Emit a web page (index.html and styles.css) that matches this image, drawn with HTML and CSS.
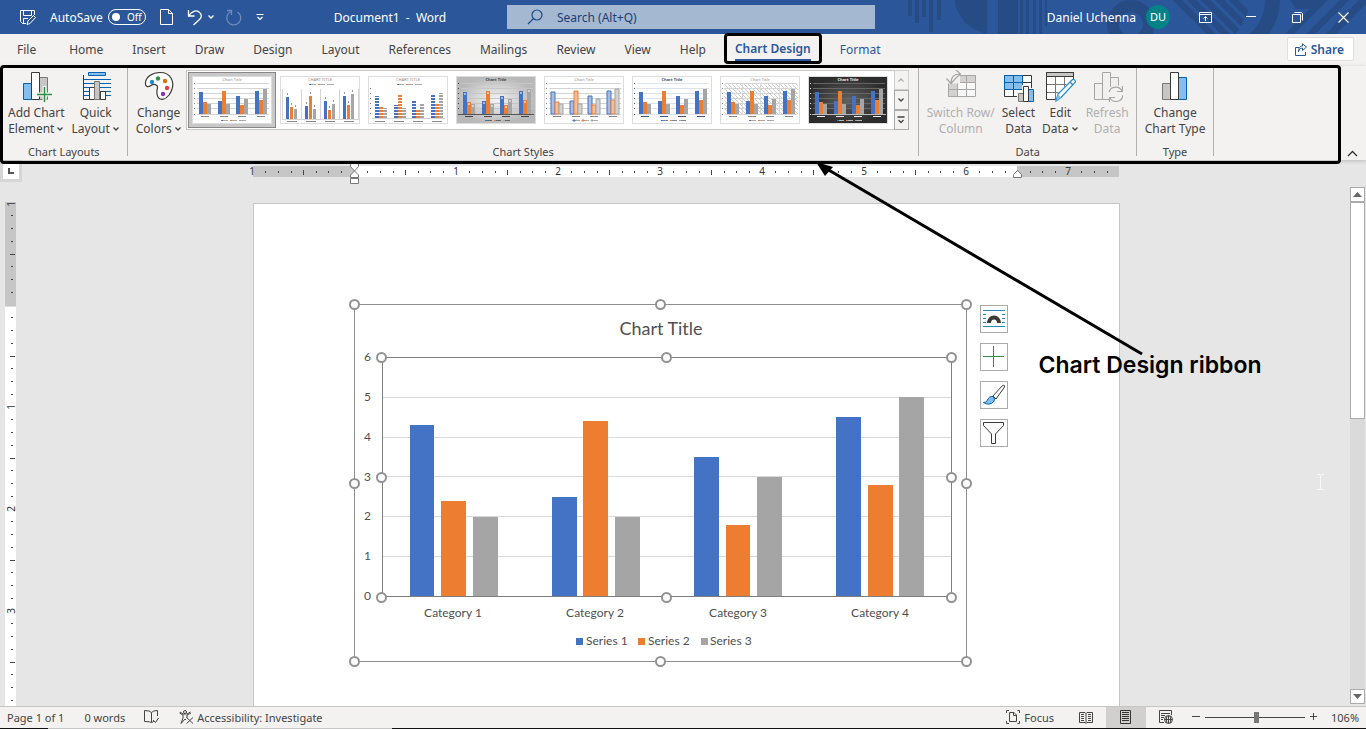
FILE: index.html
```html
<!DOCTYPE html>
<html lang="en">

<head>
    <meta charset="UTF-8">
    <meta name="viewport" content="width=device-width, initial-scale=1.0">
    <title>Document1 - Word</title>
    <link rel="stylesheet" href="styles.css">
</head>

<body>
    <!-- shared drawings -->
    <svg class="defs" width="0" height="0" aria-hidden="true">
        <defs>
            <symbol id="chevron" viewBox="0 0 8 6"><path d="M1.5 1.5L4 4L6.5 1.5" fill="none" stroke="currentColor" stroke-width="1.3"/></symbol>
            <symbol id="thumb-grid" viewBox="0 0 80 48">
                <path d="M5 7.5H77M5 12.5H77M5 17.5H77M5 22.5H77M5 27.5H77M5 32.5H77M5 38.5H77" stroke="var(--grid)"/>
                <path d="M2 7.5h1M2 12.5h1M2 17.5h1M2 22.5h1M2 27.5h1M2 32.5h1M2 38.5h1" stroke="var(--ink)"/>
            </symbol>
            <symbol id="thumb-bars" viewBox="0 0 80 48">
                <path class="s1" d="M7 16h4v22h-4zM26 25h4v13h-4zM44 20h4v18h-4zM63 15h4v23h-4z"/>
                <path class="s2" d="M11 26h4v12h-4zM30 15h4v23h-4zM48 29h4v9h-4zM67 24h4v14h-4z"/>
                <path class="s3" d="M15 28h4v10h-4zM34 28h4v10h-4zM52 23h4v15h-4zM71 13h4v25h-4z"/>
            </symbol>
            <symbol id="thumb-labels" viewBox="0 0 80 48">
                <path d="M9 40.5h8M28 40.5h8M46 40.5h8M65 40.5h8" stroke="var(--ink)"/>
                <path d="M31 44.5h5M40 44.5h5M49 44.5h5" stroke="var(--ink)" opacity=".7"/>
                <path class="s1" d="M29 44h2v1h-2z"/><path class="s2" d="M38 44h2v1h-2z"/><path class="s3" d="M47 44h2v1h-2z"/>
            </symbol>
            <symbol id="thumb-top" viewBox="0 0 80 48">
                <path d="M7 45.5h10M26 45.5h10M45 45.5h10M64 45.5h10" stroke="var(--ink)"/>
                <path d="M31 8.5h5M40 8.5h5M49 8.5h5" stroke="var(--ink)" opacity=".7"/>
                <path class="s1" d="M29 8h2v1h-2z"/><path class="s2" d="M38 8h2v1h-2z"/><path class="s3" d="M47 8h2v1h-2z"/>
            </symbol>
            <pattern id="hatch" width="4" height="4" patternUnits="userSpaceOnUse"><path d="M0 0L4 4" stroke="#c4c4c4" stroke-width=".8"/></pattern>
            <pattern id="stripe" width="4" height="3" patternUnits="userSpaceOnUse"><path d="M0 .5H4" stroke="#fff"/></pattern>
            <radialGradient id="silver"><stop offset="0" stop-color="#f4f4f4"/><stop offset="1" stop-color="#b8b8b8"/></radialGradient>
            <radialGradient id="coal"><stop offset="0" stop-color="#606060"/><stop offset="1" stop-color="#2c2c2c"/></radialGradient>
            <pattern id="ticks" x="-1" width="102" height="11" patternUnits="userSpaceOnUse">
                <path d="M13 5h1v2h-1zM26 5h1v2h-1zM39 5h1v2h-1zM51 4h1v5h-1zM64 5h1v2h-1zM76 5h1v2h-1zM89 5h1v2h-1z" fill="#444"/>
            </pattern>
            <pattern id="ticks-v" y="1" width="11" height="102" patternUnits="userSpaceOnUse">
                <path d="M6 12h2v1h-2zM6 25h2v1h-2zM6 38h2v1h-2zM5 51h5v1h-5zM6 63h2v1h-2zM6 76h2v1h-2zM6 89h2v1h-2z" fill="#444"/>
            </pattern>
        </defs>
    </svg>

    <header class="titlebar">
        <svg class="pattern" width="466" height="34" aria-hidden="true">
            <path d="M8 0h4v16h-4zM15 0h4v23h-4zM22 0h4v17h-4zM29 0h4v32h-4zM37 0h4v20h-4zM55 0h32v34q-20-5-27-19q-5-6-5-15zM98 0h20v34h-20zM120 0h3v34h-3zM126 0h3v34h-3zM133 0h3v34h-3zM139 0h3v34h-3zM145 0h2v26h-2z"/>
            <path d="M273 0h9l34 34h-9zM287 0h9l34 34h-9zM301 0h9l29 29l-4 5zM315 0h9l20 20l-3 6zM329 0h9l10 10l-2 7z"/>
            <path d="M365 0h15q0 18-11 34h-20q16-13 16-34zM390 0h38l-34 34h-9l25-25h-14zM440 0h9l-34 34h-9zM459 0h7v4l-30 30h-10z"/>
            <circle cx="231" cy="24" r="18" fill="none" stroke="#274b84" stroke-width="12"/>
        </svg>
        <div class="titlebar-left">
            <div class="quick-access">
                <button class="icon-btn" aria-label="Save"><svg width="17" height="17" fill="none" stroke="#fff"><path d="M7 14.5H3.5L1.5 12.5V1.5H15.5V6M4.5 1.5V6.5H12.5V1.5M4.5 14V9.5H9M8 15.5L9 12L14.5 6.5L16.5 8.5L11 14.5Z"/></svg></button>
                <label class="autosave">AutoSave <input type="checkbox" aria-label="AutoSave"><span class="toggle">Off</span></label>
                <button class="icon-btn" aria-label="New"><svg width="13" height="17" fill="none" stroke="#fff"><path d="M.5 .5H8.5L12.5 4.5V15.5H.5ZM8.5 .5V4.5H12.5"/></svg></button>
                <button class="icon-btn undo" aria-label="Undo"><svg width="16" height="17" fill="none" stroke="#fff" stroke-width="1.3"><path d="M1.5 1V7H7.5M1.5 7C5 2 9 .8 12 3S15 8 12.5 10.5L6.5 16"/></svg><svg width="8" height="6"><use href="#chevron"/></svg></button>
                <button class="icon-btn faded" aria-label="Redo"><svg width="17" height="17" fill="none" stroke="#fff" stroke-width="1.3"><path d="M2 1.5H6.5V6M6 2.5A7 7 0 1 0 12.5 3"/></svg></button>
                <button class="icon-btn" aria-label="Customize"><svg width="8" height="8" fill="none" stroke="#fff" stroke-width="1.2"><path d="M.5 1.5H7.5M1.5 4L4 6.5L6.5 4"/></svg></button>
            </div>
            <div class="doc-title">Document1&nbsp; - &nbsp;Word</div>
        </div>
        <label class="search">
            <svg width="16" height="16" fill="none" stroke="#1e4b87" stroke-width="1.2"><circle cx="10" cy="6" r="5"/><path d="M6.5 9.5L1 15"/></svg>
            <input type="text" placeholder="Search (Alt+Q)" aria-label="Search">
        </label>
        <div class="titlebar-right">
            <span class="user">Daniel Uchenna</span>
            <span class="avatar">DU</span>
            <button class="window-btn" aria-label="Ribbon display"><svg width="13" height="11" fill="none" stroke="#fff"><path d="M.5 .5H12.5V10.5H.5ZM.5 2.5H12.5M6.5 9V4.5M4.5 6.5L6.5 4.5L8.5 6.5"/></svg></button>
            <button class="window-btn" aria-label="Minimize"><svg width="10" height="11" stroke="#fff"><path d="M0 4.5H10"/></svg></button>
            <button class="window-btn" aria-label="Restore"><svg width="11" height="11" fill="none" stroke="#fff"><path d="M.5 2.5H8.5V10.5H.5ZM2.5 .5H9.5L10.5 1.5V8.5"/></svg></button>
            <button class="window-btn" aria-label="Close"><svg width="11" height="11" stroke="#fff" stroke-width="1.2"><path d="M.5 .5L10.5 10.5M10.5 .5L.5 10.5"/></svg></button>
        </div>
    </header>

    <nav class="tabs">
        <button class="tab">File</button>
        <button class="tab">Home</button>
        <button class="tab">Insert</button>
        <button class="tab">Draw</button>
        <button class="tab">Design</button>
        <button class="tab">Layout</button>
        <button class="tab">References</button>
        <button class="tab">Mailings</button>
        <button class="tab">Review</button>
        <button class="tab">View</button>
        <button class="tab">Help</button>
        <button class="tab active"><span>Chart Design</span></button>
        <button class="tab contextual">Format</button>
        <button class="share"><svg width="12" height="13" fill="none" stroke="#2b579a"><path d="M4 4.5H.5V12.5H10.5V9M3.5 9C4 6 5.5 5 7.5 5V7.5L11.5 4L7.5 .8V3C5 3 3.5 5 3.5 9Z"/></svg>Share</button>
    </nav>

    <section class="ribbon">
        <div class="group">
            <div class="group-body">
                <button class="tool">
                    <svg width="32" height="32"><path d="M3.5 13.5h8v16h-8z" fill="#83beec" stroke="#0063b1"/><path d="M19.5 7.5h8v22h-8z" fill="#c8c6c4" stroke="#797774"/><path d="M11.5 2.5h8v27h-8z" fill="#fff" stroke="#3a3a38"/><path d="M24.5 16V32M17 24.5H32" stroke="#f3f2f1" stroke-width="4"/><path d="M24.5 17V32M17 24.5H32" stroke="#309048" stroke-width="1.5"/></svg>
                    <span>Add Chart<br>Element<svg class="chev"><use href="#chevron"/></svg></span>
                </button>
                <button class="tool">
                    <svg width="32" height="32"><path d="M8.5 2.5h17v3h-17z" fill="#83beec" stroke="#0063b1"/><path d="M4 9.5H31M4 13.5H31M4 17.5H31M4 21.5H31M4 25.5H31" stroke="#0063b1"/><path d="M3.5 5V29.5H26" fill="none" stroke="#3a3a38"/><path d="M9.5 17.5h5v12h-5zM20.5 21.5h5v8h-5z" fill="#fff" stroke="#3a3a38"/><path d="M14.5 11.5h5v18h-5z" fill="#c8c6c4" stroke="#797774"/></svg>
                    <span>Quick<br>Layout<svg class="chev"><use href="#chevron"/></svg></span>
                </button>
            </div>
            <div class="group-name">Chart Layouts</div>
        </div>
        <div class="group">
            <div class="group-body">
                <button class="tool">
                    <svg width="32" height="32"><path d="M17 2.5C9 2.5 3 7 2.5 12.5C2 17 5 17.5 8 15.5C11 13.5 15 14.5 14.5 18C14 21 13 23 15 27C17 31 22 30 26 25C30 19 31 13 28 8C26 4.5 22 2.5 17 2.5Z" fill="#fff" stroke="#3a3a38" stroke-width="1.2"/><circle cx="9" cy="12" r="2.2" fill="#1e8bcd"/><circle cx="15" cy="8.5" r="2.2" fill="#309048"/><circle cx="22" cy="11" r="2.2" fill="#e07000"/><circle cx="24" cy="18" r="2.2" fill="#ed3d3b"/><circle cx="20" cy="24" r="2.2" fill="#8e2fb0"/></svg>
                    <span>Change<br>Colors<svg class="chev"><use href="#chevron"/></svg></span>
                </button>
                <div class="gallery">
                    <button class="style selected" aria-label="Style 1"><svg class="thumb" width="80" height="48"><use href="#thumb-grid"/><use href="#thumb-bars"/><use href="#thumb-labels"/><text x="40" y="5">Chart Title</text></svg></button>
                    <button class="style" aria-label="Style 2"><svg class="thumb" width="80" height="48">
                            <path d="M2.5 13V43M21.5 13V43M40.5 13V43M59.5 13V43M78.5 13V43M2 43.5H79" stroke="#d4d4d4"/>
                            <path class="s1" d="M6 21h3v22h-3zM25 30h3v13h-3zM44 25h3v18h-3zM63 20h3v23h-3z"/><path class="s2" d="M10 31h3v12h-3zM29 20h3v23h-3zM48 34h3v9h-3zM67 29h3v14h-3z"/><path class="s3" d="M14 33h3v10h-3zM33 33h3v10h-3zM52 28h3v15h-3zM71 18h3v25h-3z"/>
                            <path d="M7 18h1M11 28h1M15 30h1M26 27h1M30 17h1M34 30h1M45 22h1M49 31h1M53 25h1M64 17h1M68 26h1M72 15h1" stroke="#999" stroke-width="2"/><use href="#thumb-top"/><text x="40" y="5">CHART TITLE</text></svg></button>
                    <button class="style" aria-label="Style 3"><svg class="thumb" width="80" height="48"><use href="#thumb-bars" y="4"/><path d="M4 12h72v30h-72z" fill="url(#stripe)"/><path d="M4 42.5H77" stroke="#d4d4d4"/><path d="M2 12.5h1M2 17.5h1M2 22.5h1M2 27.5h1M2 32.5h1M2 37.5h1" stroke="#777"/><use href="#thumb-top"/><text x="40" y="5">CHART TITLE</text></svg></button>
                    <button class="style" aria-label="Style 4"><svg class="thumb silver" width="80" height="48"><path d="M0 0h80v48h-80z" fill="url(#silver)"/><use href="#thumb-grid"/><use href="#thumb-bars"/><path d="M2 38.5H78" stroke="#555"/><path d="M8 18h2M27 27h2M45 22h2M64 17h2M12 28h2M31 17h2M49 31h2M68 26h2M16 30h2M35 30h2M53 25h2M72 15h2" stroke="#fff"/><use href="#thumb-labels"/><text x="40" y="5" font-weight="700">Chart Title</text></svg></button>
                    <button class="style" aria-label="Style 5"><svg class="thumb outlined" width="80" height="48"><use href="#thumb-grid"/><use href="#thumb-bars"/><use href="#thumb-labels"/><text x="40" y="5">Chart Title</text></svg></button>
                    <button class="style" aria-label="Style 6"><svg class="thumb pale" width="80" height="48"><use href="#thumb-grid"/><use href="#thumb-bars"/><use href="#thumb-labels"/><text x="40" y="5" font-weight="700">Chart Title</text></svg></button>
                    <button class="style" aria-label="Style 7"><svg class="thumb" width="80" height="48"><path d="M4 7h74v31h-74z" fill="url(#hatch)"/><path d="M22.5 7V38M40.5 7V38M59.5 7V38" stroke="#ddd"/><use href="#thumb-grid"/><use href="#thumb-bars"/><use href="#thumb-labels"/><text x="40" y="5">Chart Title</text></svg></button>
                    <button class="style" aria-label="Style 8"><svg class="thumb dark" width="80" height="48"><path d="M0 0h80v48h-80z" fill="url(#coal)"/><use href="#thumb-grid"/><use href="#thumb-bars"/><path d="M4 38.5H78" stroke="#bbb"/><use href="#thumb-labels"/><text x="40" y="5" font-weight="700">Chart Title</text></svg></button>
                    <div class="gallery-nav">
                        <button class="disabled" aria-label="Previous row"><svg width="8" height="6" fill="none" stroke="currentColor" stroke-width="1.3"><path d="M1.5 4.5L4 2L6.5 4.5"/></svg></button>
                        <button aria-label="Next row"><svg width="8" height="6"><use href="#chevron"/></svg></button>
                        <button aria-label="More styles"><svg width="8" height="8" fill="none" stroke="currentColor" stroke-width="1.3"><path d="M.5 1H7.5M1.5 4L4 6.5L6.5 4"/></svg></button>
                    </div>
                </div>
            </div>
            <div class="group-name">Chart Styles</div>
        </div>
        <div class="group">
            <div class="group-body">
                <button class="tool disabled">
                    <svg width="32" height="32" fill="none" stroke="#a8a6a4"><path d="M3.5 5.5h27v21h-27z" fill="#f8f8f8"/><path d="M3.5 5.5h27v7h-18v14h-9z" fill="#d4d2d0"/><path d="M3.5 12.5H30.5M3.5 19.5H30.5M12.5 5.5V26.5M21.5 5.5V26.5"/><path d="M1 .5h14v13h-14z" fill="#f3f2f1" stroke="none"/><path d="M6 13C6 7 9 4 15 4M1.5 8.5L6 13.5L10.5 8.5M10.5 -.5L15.5 4L10.5 8.5" stroke-width="1.2"/></svg>
                    <span>Switch Row/<br>Column</span>
                </button>
                <button class="tool">
                    <svg width="32" height="32"><path d="M2.5 5.5h27v21h-27z" fill="#fff" stroke="#3a3a38"/><path d="M2.5 5.5h18v14h-18z" fill="#83beec"/><path d="M2.5 12.5H29.5M2.5 19.5H29.5M11.5 5.5V26.5M20.5 5.5V26.5" stroke="#3a3a38"/><path d="M2.5 19.5V5.5H20.5V19.5ZM2.5 12.5H20.5M11.5 5.5V19.5" fill="none" stroke="#0063b1"/><path d="M15 22h5v-7h7v3h5v14h-17z" fill="#f3f2f1"/><path d="M16.5 23.5h5v8h-5z" fill="#c8c6c4" stroke="#797774"/><path d="M26.5 19.5h5v12h-5z" fill="#83beec" stroke="#0063b1"/><path d="M21.5 16.5h5v15h-5z" fill="#fff" stroke="#3a3a38"/></svg>
                    <span>Select<br>Data</span>
                </button>
                <button class="tool">
                    <svg width="32" height="32"><path d="M2.5 2.5h27v27h-27z" fill="#fff" stroke="#3a3a38"/><path d="M2.5 2.5h27v4h-27z" fill="#c8c6c4" stroke="#3a3a38"/><path d="M3 14.5H29M3 22.5H29M11.5 7V29M20.5 7V29" stroke="#797774"/><path d="M11 32L14 23L28 9L33 14L32 32Z" fill="#f3f2f1"/><path d="M12 31L14 24L28.5 9.5Q31 9 31.5 12L17 27.5ZM26 12L29 15" fill="#fff" stroke="#1e8bcd" stroke-width="1.2"/><path d="M12 31L14 24L17 27.5Z" fill="#83beec"/></svg>
                    <span>Edit<br>Data<svg class="chev"><use href="#chevron"/></svg></span>
                </button>
                <button class="tool disabled">
                    <svg width="32" height="32" fill="#f1f0ef" stroke="#a8a6a4"><path d="M3.5 13.5h8v16h-8zM19.5 7.5h8v22h-8zM11.5 2.5h8v27h-8z"/><circle cx="25" cy="24" r="9" fill="#f3f2f1" stroke="none"/><path d="M18 22A7 7 0 0 1 31 21M31.5 16V21.5H26M32 25A7 7 0 0 1 19 28M18.5 32V27.5H24" fill="none" stroke-width="1.2"/></svg>
                    <span>Refresh<br>Data</span>
                </button>
            </div>
            <div class="group-name">Data</div>
        </div>
        <div class="group">
            <div class="group-body">
                <button class="tool">
                    <svg width="32" height="32"><path d="M3.5 13.5h8v16h-8z" fill="#c8c6c4" stroke="#797774"/><path d="M19.5 7.5h8v22h-8z" fill="#83beec" stroke="#0063b1"/><path d="M11.5 2.5h8v27h-8z" fill="#fff" stroke="#3a3a38"/></svg>
                    <span>Change<br>Chart Type</span>
                </button>
            </div>
            <div class="group-name">Type</div>
        </div>
        <button class="collapse" aria-label="Collapse ribbon"><svg width="11" height="7" fill="none" stroke="#333" stroke-width="1.3"><path d="M1 6L5.5 1.5L10 6"/></svg></button>
        <div class="ribbon-mark"></div>
    </section>

    <main class="workspace">
        <div class="corner"><button aria-label="Tab selector"><svg width="6" height="6"><path d="M0 0h2v4h4v2h-6z" fill="#555"/></svg></button></div>
        <div class="ruler">
            <svg class="ruler-h" width="866" height="11">
                <path d="M0 0h866v11h-866z" fill="#c6c6c6"/><path d="M101 0h663v11h-663z" fill="#fff"/><path d="M0 0h866v11h-866z" fill="url(#ticks)"/>
                <g><text x="-1" y="9">1</text><text x="203" y="9">1</text><text x="305" y="9">2</text><text x="407" y="9">3</text><text x="509" y="9">4</text><text x="611" y="9">5</text><text x="713" y="9">6</text><text x="815" y="9">7</text></g>
                <path d="M97.5 -2.5h8v3l-4 4.5l-4-4.5zM97.5 11.5v-2.5l4-4l4 4v2.5zM97.5 12.5h8v5h-8zM760.5 11.5v-3l4-4l4 4v3z" fill="#fff" stroke="#777"/>
            </svg>
        </div>
        <div class="ruler-side">
            <svg class="ruler-v" width="11" height="504">
                <path d="M0 0h11v104h-11z" fill="#c6c6c6"/><path d="M0 104h11v1h-11z" fill="#ddd"/><path d="M0 105h11v399h-11z" fill="#fff"/><path d="M0 0h11v504h-11z" fill="url(#ticks-v)"/>
                <g><text transform="translate(10 2) rotate(-90)">1</text><text transform="translate(10 205) rotate(-90)">1</text><text transform="translate(10 307) rotate(-90)">2</text><text transform="translate(10 409) rotate(-90)">3</text></g>
            </svg>
        </div>
        <div class="canvas">
            <article class="page">
                <svg class="chart" width="624" height="370">
                    <rect x="6.5" y="6.5" width="612" height="357" fill="#fff" stroke="#8e8e8e"/>
                    <text class="chart-title" x="313" y="37">Chart Title</text>
                    <path d="M35 99.5H603M35 139.5H603M35 178.5H603M35 218.5H603M35 258.5H603" stroke="#d9d9d9"/>
                    <path fill="#4472c4" d="M62 127h24v171h-24zM204 199h25v99h-25zM346 159h25v139h-25zM488 119h25v179h-25z"/>
                    <path fill="#ed7d31" d="M93 203h25v95h-25zM235 123h25v175h-25zM378 227h24v71h-24zM520 187h25v111h-25z"/>
                    <path fill="#a5a5a5" d="M125 219h25v79h-25zM267 219h25v79h-25zM409 179h25v119h-25zM551 99h25v199h-25z"/>
                    <rect x="34.5" y="59.5" width="569" height="239" fill="none" stroke="#7f7f7f"/>
                    <g class="axis-y"><text x="23" y="63">6</text><text x="23" y="103">5</text><text x="23" y="143">4</text><text x="23" y="183">3</text><text x="23" y="222">2</text><text x="23" y="262">1</text><text x="23" y="302">0</text></g>
                    <g class="axis-x"><text x="105" y="319">Category 1</text><text x="247" y="319">Category 2</text><text x="390" y="319">Category 3</text><text x="532" y="319">Category 4</text></g>
                    <path d="M228 340h7v7h-7z" fill="#4472c4"/><path d="M290 340h7v7h-7z" fill="#ed7d31"/><path d="M353 340h7v7h-7z" fill="#a5a5a5"/>
                    <g><text x="238" y="347">Series 1</text><text x="300" y="347">Series 2</text><text x="362" y="347">Series 3</text></g>
                    <!-- selection handles -->
                    <g fill="#fff" stroke="#929292" stroke-width="2">
                        <circle cx="6.5" cy="6.5" r="4.5"/><circle cx="312.5" cy="6.5" r="4.5"/><circle cx="618.5" cy="6.5" r="4.5"/><circle cx="6.5" cy="185.5" r="4.5"/><circle cx="618.5" cy="185.5" r="4.5"/><circle cx="6.5" cy="363.5" r="4.5"/><circle cx="312.5" cy="363.5" r="4.5"/><circle cx="618.5" cy="363.5" r="4.5"/>
                        <circle cx="33.5" cy="59.5" r="4.5"/><circle cx="318.5" cy="59.5" r="4.5"/><circle cx="603.5" cy="59.5" r="4.5"/><circle cx="33.5" cy="179.5" r="4.5"/><circle cx="603.5" cy="179.5" r="4.5"/><circle cx="33.5" cy="299.5" r="4.5"/><circle cx="318.5" cy="299.5" r="4.5"/><circle cx="603.5" cy="299.5" r="4.5"/>
                    </g>
                </svg>
                <div class="chart-tools">
                    <button aria-label="Layout options"><svg width="22" height="22" fill="none" stroke="#1e8bcd"><path d="M0 2.5H22M0 18.5H22M0 6.5H3M0 10.5H3M0 14.5H3M19 6.5H22M19 10.5H22M19 14.5H22"/><path d="M6 15A5 5.5 0 0 1 16 15" stroke="#3a3a38" stroke-width="4"/></svg></button>
                    <button aria-label="Chart elements"><svg width="22" height="22" stroke="#309048"><path d="M10.5 0V21M0 10.5H21"/></svg></button>
                    <button aria-label="Chart styles"><svg width="22" height="22" fill="#fff" stroke="#3a3a38"><path d="M10 12L19 2Q22 0 21.5 3L13 15Z"/><path d="M.5 18.5Q3 19 4.5 16Q6 12 10 12.5Q13 15 10.5 18Q6 22 .5 18.5Z" fill="#83beec" stroke="#0063b1"/></svg></button>
                    <button aria-label="Chart filters"><svg width="22" height="22" fill="#fafafa" stroke="#3a3a38"><path d="M.5 .5H20.5V3.5L12.5 12V21.5H8.5V12L.5 3.5Z"/></svg></button>
                </div>
                <svg class="arrow" width="335" height="200" aria-hidden="true"><path d="M16 8L331 193" stroke="#000" stroke-width="3"/><path d="M5 1L22 6L14 15Z"/></svg>
                <div class="arrow-label">Chart Design ribbon</div>
            </article>
            <svg class="ibeam" width="8" height="16" fill="none" stroke="#f8f8f8" aria-hidden="true"><path d="M0 .5H3L3.5 1L4 .5H7M3.5 1V15M0 15.5H3L3.5 15L4 15.5H7"/></svg>
        </div>
        <div class="scrollbar">
            <button aria-label="Scroll up"><svg width="9" height="5"><path d="M0 5L4.5 0L9 5Z" fill="#666"/></svg></button>
            <div class="scroll-thumb"></div>
            <button class="scroll-down" aria-label="Scroll down"><svg width="9" height="5"><path d="M0 0L4.5 5L9 0Z" fill="#666"/></svg></button>
        </div>
    </main>

    <footer class="statusbar">
        <span class="page-count">Page 1 of 1</span>
        <span class="word-count">0 words</span>
        <svg class="proof" width="15" height="14" fill="none" stroke="#444"><path d="M7.5 2.5V12.5M7.5 2.5Q6 .5 .5 .5V11.5Q6 11.5 7.5 12.5M7.5 2.5Q9 .5 13.5 .5V6M8 12.5L10 11M9 10L11.5 12.5L14.5 8"/></svg>
        <svg width="15" height="14" fill="none" stroke="#444"><circle cx="6" cy="2" r="1.5"/><path d="M.5 3L4 5V8L2 13.5L6 9L7 10M12 3L8 5V8M1 2L4 4H8L11.5 2M7.5 7.5L14 13.5M14 7.5L7.5 13.5"/></svg>
        <span class="access">Accessibility: Investigate</span>
        <button class="focus"><svg width="15" height="14" fill="none" stroke="#444"><path d="M3 .5H.5V3M.5 11V13.5H3M11.5 .5H13.5V3M13.5 11V13.5H11.5M3.5 2.5H8L10.5 5V11.5H3.5ZM7.5 2.5V5.5H10.5"/></svg>Focus</button>
        <button class="view" aria-label="Read mode"><svg width="14" height="13" fill="none" stroke="#444"><path d="M.5 1.5H6L7 2.5L8 1.5H13.5V11.5H8L7 12.5L6 11.5H.5ZM7 2.5V12M2 3.5H5M2 5.5H5M2 7.5H5M2 9.5H5M9 3.5H12M9 5.5H12M9 7.5H12M9 9.5H12"/></svg></button>
        <button class="view current" aria-label="Print layout"><svg width="12" height="14" fill="none" stroke="#333"><path d="M.5 .5H10.5V13.5H.5ZM2 2.5H9M2 4.5H9M2 6.5H9M2 8.5H9M2 10.5H9"/></svg></button>
        <button class="view" aria-label="Web layout"><svg width="14" height="14" fill="none" stroke="#444"><path d="M5 12.5H.5V.5H12.5V5M2 3.5H11M2 5.5H6M2 7.5H5M2 9.5H4"/><circle cx="9.5" cy="9.5" r="4"/><path d="M5.5 9.5H13.5M9.5 5.5V13.5M8 6Q6.5 9.5 8 13M11 6Q12.5 9.5 11 13"/></svg></button>
        <div class="zoom">
            <button aria-label="Zoom out"><svg width="8" height="8" stroke="#444"><path d="M0 3.5H8"/></svg></button>
            <input type="range" min="0" max="100" value="52" aria-label="Zoom">
            <button aria-label="Zoom in"><svg width="8" height="8" stroke="#444"><path d="M0 3.5H7M3.5 0V7"/></svg></button>
            <span class="zoom-value">106%</span>
        </div>
    </footer>
</body>

</html>
```

FILE: styles.css
```css
* {
    box-sizing: border-box;
}

body {
    margin: 0;
    height: 100vh;
    display: flex;
    flex-direction: column;
    overflow: hidden;
    font-family: 'Noto Sans', 'Open Sans', sans-serif;
    font-size: 12px;
    color: #444;
    background: #e6e6e6;
}

button {
    padding: 0;
    border: none;
    background: none;
    font: inherit;
    color: inherit;
}

svg {
    display: block;
    flex-shrink: 0;
}

.defs {
    position: absolute;
}

/* Title bar */
.titlebar {
    position: relative;
    display: grid;
    grid-template-columns: 507px minmax(0, 368px) 1fr;
    align-items: center;
    height: 34px;
    flex-shrink: 0;
    background: #2b579a;
    color: #fff;
}

.pattern {
    position: absolute;
    right: 0;
    top: 0;
    fill: #274b84;
}

.titlebar-left,
.titlebar-right,
.quick-access {
    display: flex;
    align-items: center;
}

.quick-access {
    width: 273px;
    padding-left: 19px;
    gap: 14px;
}

.icon-btn {
    display: flex;
    align-items: center;
}

.undo {
    gap: 4px;
}

.faded {
    opacity: 0.3;
    margin-left: -4px;
}

.autosave {
    display: flex;
    align-items: center;
    gap: 5px;
    position: relative;
}

.autosave input {
    position: absolute;
    opacity: 0;
    right: 0;
}

.toggle {
    display: flex;
    align-items: center;
    gap: 7px;
    width: 38px;
    height: 16px;
    padding-left: 3px;
    border: 1px solid #fff;
    border-radius: 8px;
    font-size: 10px;
}

.toggle::before {
    content: "";
    width: 8px;
    height: 8px;
    border-radius: 50%;
    background: #fff;
}

.doc-title {
    flex: 1;
    text-align: center;
}

.search {
    display: flex;
    align-items: center;
    gap: 14px;
    height: 24px;
    padding-left: 20px;
    background: #a5b8d1;
}

.search input {
    flex: 1;
    min-width: 0;
    padding: 0;
    border: none;
    outline: none;
    background: none;
    font: inherit;
}

.search input::placeholder {
    color: #1b3f73;
}

.titlebar-right {
    position: relative;
    justify-content: flex-end;
}

.avatar {
    width: 24px;
    height: 24px;
    margin: 0 17px 0 10px;
    border-radius: 50%;
    background: #038387;
    font-size: 11px;
    line-height: 24px;
    text-align: center;
}

.window-btn {
    width: 46px;
    height: 34px;
    display: flex;
    align-items: center;
    justify-content: center;
}

.window-btn:nth-of-type(1) {
    margin-left: -5px;
}

/* Tabs */
.tabs {
    display: flex;
    align-items: center;
    gap: 1px;
    height: 32px;
    flex-shrink: 0;
    padding: 0 12px 2px 3px;
    background: #f3f2f1;
}

.tab {
    height: 30px;
    padding: 0 14px;
    white-space: nowrap;
}

.tab:first-child {
    padding-right: 18px;
}

.contextual,
.active {
    color: #2b579a;
}

.active {
    position: relative;
    font-weight: 600;
}

.active span {
    display: block;
    padding: 3px 0 1px;
    line-height: 18px;
    border-bottom: 2px solid #2b579a;
}

.active::after {
    content: "";
    position: absolute;
    inset: -1px 3px 0;
    border: 3px solid #000;
    border-radius: 4px;
}

.share {
    display: flex;
    align-items: center;
    gap: 4px;
    height: 24px;
    margin-left: auto;
    padding: 0 9px 0 7px;
    border: 1px solid #e1dfdd;
    border-radius: 2px;
    background: #fff;
    color: #2b579a;
    font-weight: 600;
}

/* Ribbon */
.ribbon {
    position: relative;
    z-index: 2;
    display: flex;
    height: 94px;
    flex-shrink: 0;
    background: #f3f2f1;
    box-shadow: 0 1px 4px rgba(0, 0, 0, 0.2);
}

.group {
    position: relative;
    display: flex;
    flex-direction: column;
    justify-content: space-between;
    padding: 4px 5px 0;
}

.group::after {
    content: "";
    position: absolute;
    right: 0;
    top: 2px;
    bottom: 4px;
    width: 1px;
    background: #b3b0ad;
}

.group-body {
    display: flex;
    gap: 1px;
}

.group-name {
    line-height: 16px;
    text-align: center;
    font-size: 11px;
}

.tool {
    display: flex;
    flex-direction: column;
    align-items: center;
    gap: 3px;
    height: 68px;
    padding: 0 3px;
    line-height: 16px;
    white-space: nowrap;
}

.disabled {
    color: #b1afad;
}

.chev {
    display: inline-block;
    width: 8px;
    height: 6px;
    margin-left: 2px;
    vertical-align: 1px;
}

.gallery {
    display: flex;
    height: 60px;
    margin-right: 5px;
    border: 1px solid #c8c8c8;
    background: #fff;
}

.style {
    width: 88px;
    height: 56px;
    margin-top: 1px;
    display: flex;
    align-items: center;
    justify-content: center;
}

.style:first-child {
    margin-left: 1px;
}

.selected {
    background: #c8c8c8;
    border: 1px solid #8a8886;
}

.thumb {
    --grid: #d4d4d4;
    --ink: #888;
    background: #fff;
    outline: 1px solid #dcdcdc;
    outline-offset: -1px;
}

.thumb text {
    font-size: 4px;
    text-anchor: middle;
    fill: var(--ink);
}

.s1 {
    fill: var(--s1, #4472c4);
    stroke: var(--s1-line, none);
}

.s2 {
    fill: var(--s2, #ed7d31);
    stroke: var(--s2-line, none);
}

.s3 {
    fill: var(--s3, #a5a5a5);
    stroke: var(--s3-line, none);
}

.silver {
    --grid: #c6c6c6;
    --ink: #444;
}

.outlined {
    --s1: #a9bde2;
    --s1-line: #4472c4;
    --s2: #f6be98;
    --s2-line: #ed7d31;
    --s3: #d2d2d2;
    --s3-line: #a5a5a5;
}

.pale {
    --grid: #dde3ec;
    --ink: #44546a;
}

.dark {
    --grid: #666;
    --ink: #eee;
}

.gallery-nav {
    display: flex;
    flex-direction: column;
    width: 15px;
    margin: -1px -1px -1px 2px;
}

.gallery-nav button {
    flex: 1;
    display: flex;
    align-items: center;
    justify-content: center;
    border: 1px solid #aaa;
    background: #f3f2f1;
}

.gallery-nav .disabled {
    border-color: #d0d0d0;
}

.collapse {
    align-self: flex-end;
    margin: 0 8px 3px auto;
}

.ribbon-mark {
    position: absolute;
    inset: -1px 25px -4px 0;
    border: 3px solid #000;
    border-radius: 4px;
    pointer-events: none;
}

/* Document area */
.workspace {
    flex: 1;
    min-height: 0;
    display: grid;
    grid-template-columns: 22px 1fr 16px;
    grid-template-rows: 42px 1fr;
    overflow: hidden;
}

.corner {
    height: 22px;
    padding: 3px;
    background: #d6d6d6;
}

.corner button {
    display: flex;
    align-items: center;
    justify-content: center;
    width: 16px;
    height: 16px;
    background: #fff;
}

.ruler {
    display: flex;
    justify-content: center;
    padding-top: 6px;
}

.ruler-h,
.ruler-v {
    overflow: visible;
}

.ruler-h text,
.ruler-v text {
    font-size: 10px;
    text-anchor: middle;
    fill: #333;
}

.ruler-side {
    grid-row: 2;
    padding-left: 5px;
    overflow: hidden;
}

.canvas {
    grid-row: 2;
    grid-column: 2;
    position: relative;
    display: flex;
    justify-content: center;
    padding-top: 1px;
}

.page {
    position: relative;
    z-index: 1;
    display: flex;
    align-items: flex-start;
    gap: 8px;
    width: 867px;
    height: 100%;
    padding: 94px 0 0 94px;
    border: 1px solid #c6c6c6;
    border-bottom: none;
    background: #fff;
}

.chart text {
    font-family: Lato, 'Open Sans', sans-serif;
    font-size: 12px;
    fill: #505050;
}

.chart .chart-title {
    font-size: 18px;
    text-anchor: middle;
}

.chart .axis-x {
    text-anchor: middle;
}

.chart .axis-y {
    text-anchor: end;
}

.chart-tools {
    display: flex;
    flex-direction: column;
    gap: 10px;
    padding-top: 7px;
}

.chart-tools button {
    display: flex;
    align-items: center;
    justify-content: center;
    width: 28px;
    height: 28px;
    border: 1px solid #ababab;
    background: #fff;
}

.arrow {
    position: absolute;
    left: 557px;
    top: -43px;
}

.arrow-label {
    position: absolute;
    left: 785px;
    top: 147px;
    font-family: Inter, sans-serif;
    font-size: 23px;
    font-weight: 600;
    line-height: 28px;
    white-space: nowrap;
    color: #000;
}

.ibeam {
    position: absolute;
    right: 25px;
    top: 272px;
}

.scrollbar {
    grid-row: 1 / 3;
    grid-column: 3;
    display: flex;
    flex-direction: column;
    width: 15px;
    margin: 27px 0 2px;
    background: #dadada;
}

.scrollbar button {
    display: flex;
    align-items: center;
    justify-content: center;
    height: 15px;
    border: 1px solid #ababab;
    background: #fff;
}

.scroll-thumb {
    height: 42%;
    border: 1px solid #ababab;
    background: #fff;
}

.scrollbar .scroll-down {
    margin-top: auto;
}

/* Status bar */
.statusbar {
    position: relative;
    display: flex;
    align-items: center;
    height: 23px;
    flex-shrink: 0;
    padding: 0 7px 2px;
    border-top: 1px solid #c6c6c6;
    background: #f3f2f1;
    font-size: 11px;
}

.statusbar::after {
    content: "";
    position: absolute;
    left: 0;
    right: 0;
    bottom: 0;
    height: 1px;
    background: linear-gradient(90deg, #111 48px, #c6c6c6 48px, #c6c6c6 392px, #111 392px);
}

.word-count {
    margin-left: 20px;
}

.proof {
    margin: 0 20px 0 19px;
}

.access {
    margin-left: 3px;
}

.focus {
    display: flex;
    align-items: center;
    gap: 3px;
    margin-left: auto;
    margin-right: 12px;
}

.view {
    display: flex;
    align-items: center;
    justify-content: center;
    width: 40px;
    height: 21px;
}

.current {
    background: #d2d0ce;
}

.zoom {
    display: flex;
    align-items: center;
    gap: 5px;
    margin-left: 6px;
}

.zoom input {
    appearance: none;
    width: 100px;
    height: 11px;
    margin: 0;
    background: linear-gradient(#444, #444) center / 100% 1px no-repeat;
}

.zoom input::-webkit-slider-thumb {
    appearance: none;
    width: 5px;
    height: 11px;
    background: #777;
}

.zoom-value {
    width: 28px;
    margin-left: 8px;
}
```
